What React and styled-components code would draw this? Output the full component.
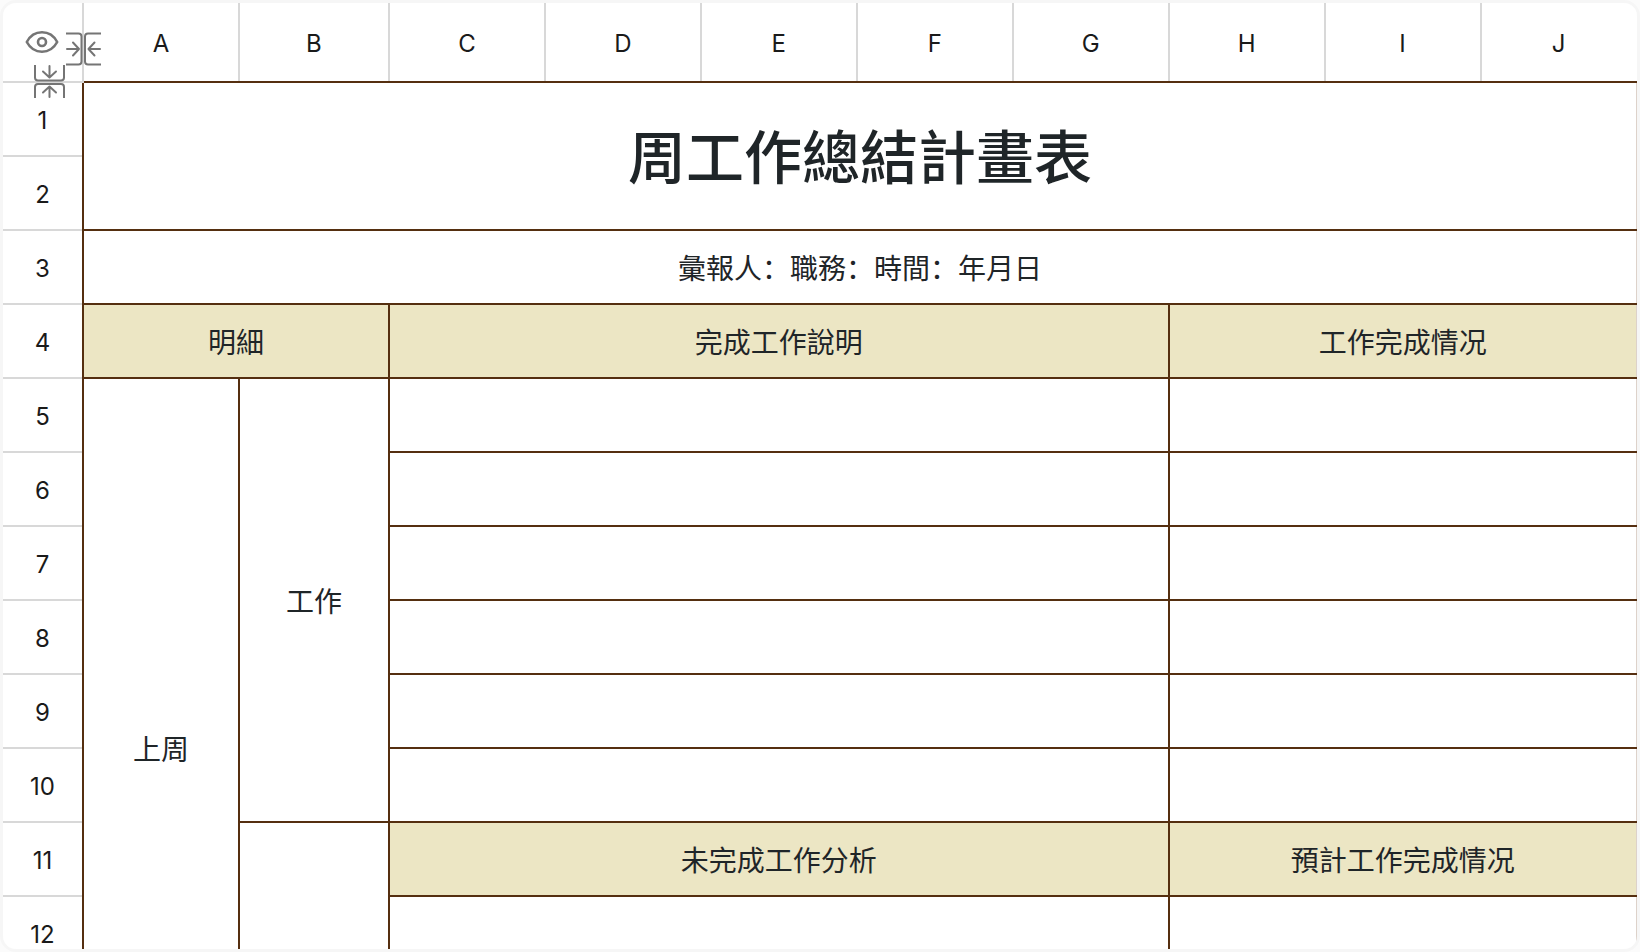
import React from 'react';
import styled, { createGlobalStyle } from 'styled-components';

const GlobalStyle = createGlobalStyle`
  body {
    margin: 0;
    background-color: #fbfbfb;
    font-family: Inter, 'Noto Sans CJK SC', sans-serif;
  }
`;

const Frame = styled.main`
  box-sizing: border-box;
  height: 100vh;
  overflow: auto;
  scrollbar-width: none;
  border: 3px solid #f6f6f6;
  border-radius: 16px;
  background-color: white;
`;

const Sheet = styled.table`
  width: 100%;
  table-layout: fixed;
  border-collapse: collapse;
`;

const Column = styled.col`
  width: ${(props) => props.$width || 'auto'};
`;

const HeadRow = styled.tr`
  height: 78px;
`;

const Row = styled.tr`
  height: 74px;
`;

const CornerCell = styled.td`
  padding: 0;
`;

const Head = styled.th`
  padding: 4px 0 0;
  font-size: 24px;
  font-weight: 400;
  line-height: 32px;
  color: #1a1a1a;
`;

const ColumnHead = styled(Head)`
  box-shadow: -1px 0 #d8d8d8, inset 1px 0 #d8d8d8;
`;

const RowHead = styled(Head)`
  border-top: 2px solid #d8d8d8;
`;

const Cell = styled.td`
  padding: 4px 0 0;
  border: 2px solid #552f10;
  border-right: ${(props) => (props.$last ? '1px solid #ddd2ca' : '')};
  background-color: ${(props) => (props.$filled ? '#ece6c4' : 'white')};
  color: #1f2528;
  font-size: ${(props) => (props.$title ? '58px' : '28px')};
  font-weight: ${(props) => (props.$title ? 500 : 400)};
  line-height: ${(props) => (props.$title ? '72px' : '40px')};
  text-align: center;
`;

const Corner = styled.div`
  position: relative;
  height: 78px;
`;

const Tool = styled.button`
  position: absolute;
  top: ${(props) => props.$top}px;
  left: ${(props) => props.$left}px;
  padding: 0;
  border: none;
  background: none;
  color: #757575;
  cursor: pointer;

  svg {
    display: block;
  }
`;

const Icon = styled.svg`
  fill: none;
  stroke: currentColor;
  stroke-width: ${(props) => props.$stroke || 2};
  stroke-linecap: round;
  stroke-linejoin: round;
`;

const EyeIcon = () => (
  <Icon $stroke={2.6} width='34' height='24' viewBox='0 0 34 24'>
    <path d='M1.800 12C5 6 10.500 2.300 17 2.300S29 6 32.200 12C29 18 23.500 21.700 17 21.700S5 18 1.800 12z' />
    <circle cx='17' cy='12' r='4' />
  </Icon>
);

const HideColumnIcon = () => (
  <Icon width='35' height='34' viewBox='0 0 35 34'>
    <path
      strokeLinecap='butt'
      d='M0 1.500h12.500q3 0 3 3v25q0 3-3 3H0M35 1.500H22q-3 0-3 3v25q0 3 3 3h13'
    />
    <path d='M1 17h12M7 10.500l6 6.500-6 6.500M34 17H22.500M28.500 10.500L22.500 17l6 6.500' />
  </Icon>
);

const HideRowIcon = () => (
  <Icon width='34' height='34' viewBox='0 0 34 34'>
    <path
      strokeLinecap='butt'
      d='M2 0v12.500q0 3 3 3h23q3 0 3-3V0M2 33V22q0-3 3-3h23q3 0 3 3v11'
    />
    <path d='M16.500 1v11M10 6.500l6.500 6 6.500-6M16.500 32V22M10 27.500l6.500-6 6.500 6' />
  </Icon>
);

const columns = ['A', 'B', 'C', 'D', 'E', 'F', 'G', 'H', 'I', 'J'];

const rows = [
  [{ text: '周工作總結計畫表', cols: 10, rows: 2, title: true, last: true }],
  [],
  [{ text: '彙報人：職務：時間：年月日', cols: 10, last: true }],
  [
    { text: '明細', cols: 2, filled: true },
    { text: '完成工作說明', cols: 5, filled: true },
    { text: '工作完成情况', cols: 3, filled: true, last: true },
  ],
  [
    { text: '上周', rows: 10 },
    { text: '工作', rows: 6 },
    { cols: 5 },
    { cols: 3, last: true },
  ],
  [{ cols: 5 }, { cols: 3, last: true }],
  [{ cols: 5 }, { cols: 3, last: true }],
  [{ cols: 5 }, { cols: 3, last: true }],
  [{ cols: 5 }, { cols: 3, last: true }],
  [{ cols: 5 }, { cols: 3, last: true }],
  [
    { rows: 4 },
    { text: '未完成工作分析', cols: 5, filled: true },
    { text: '預計工作完成情况', cols: 3, filled: true, last: true },
  ],
  [{ cols: 5 }, { cols: 3, last: true }],
  [{ cols: 5 }, { cols: 3, last: true }],
  [{ cols: 5 }, { cols: 3, last: true }],
];

const App = () => {
  return (
    <Frame>
      <GlobalStyle />
      <Sheet>
        <colgroup>
          <Column $width='80px' />
          {columns.map((name) => (
            <Column key={name} $width={name === 'B' ? '150px' : undefined} />
          ))}
        </colgroup>
        <thead>
          <HeadRow>
            <CornerCell>
              <Corner>
                <Tool $top={27} $left={22} aria-label='顯示'>
                  <EyeIcon />
                </Tool>
                <Tool $top={29} $left={63} aria-label='隱藏列'>
                  <HideColumnIcon />
                </Tool>
                <Tool $top={62} $left={30} aria-label='隱藏行'>
                  <HideRowIcon />
                </Tool>
              </Corner>
            </CornerCell>
            {columns.map((name) => (
              <ColumnHead key={name} scope='col'>
                {name}
              </ColumnHead>
            ))}
          </HeadRow>
        </thead>
        <tbody>
          {rows.map((cells, index) => (
            <Row key={index}>
              <RowHead scope='row'>{index + 1}</RowHead>
              {cells.map((cell, i) => (
                <Cell
                  key={i}
                  colSpan={cell.cols}
                  rowSpan={cell.rows}
                  $title={cell.title}
                  $filled={cell.filled}
                  $last={cell.last}
                >
                  {cell.text}
                </Cell>
              ))}
            </Row>
          ))}
        </tbody>
      </Sheet>
    </Frame>
  );
};

export default App;
